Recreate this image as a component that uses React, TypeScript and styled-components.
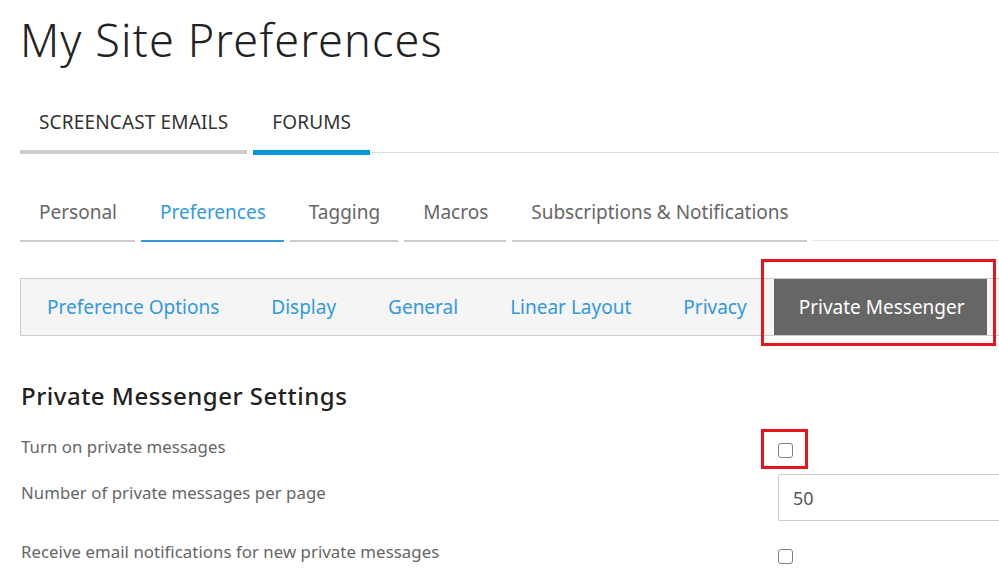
import React from 'react';
import styled, { createGlobalStyle } from 'styled-components';

const GlobalStyle = createGlobalStyle`
    html, body {
        margin: 0;
        padding: 0;
        background: #fff;
        overflow: hidden;
    }
    body {
        font-family: "Noto Sans", "Open Sans", Arial, sans-serif;
        color: #222;
    }
`;

const Page = styled.div`
    width: 1100px;
    padding: 17px 0 0 20px;
`;

const Title = styled.h1`
    margin: 0;
    font-size: 45px;
    line-height: 1;
    font-weight: 300;
    letter-spacing: 1.1px;
    color: #222;
`;

const MainTabs = styled.div`
    display: flex;
    align-items: flex-start;
    gap: 6px;
    margin-top: 48px;
`;

const MainTab = styled.div<{ $active?: boolean }>`
    padding: 0 19px 16px;
    font-size: 19px;
    line-height: 24px;
    letter-spacing: 0.15px;
    color: #333;
    text-transform: uppercase;
    border-bottom: ${p => (p.$active ? '5px solid #0696d7' : '4px solid #ccc')};
`;

const MainFiller = styled.div`
    flex: 1;
    align-self: stretch;
    border-bottom: 1px solid #ddd;
    margin-bottom: 2px;
    margin-left: -6px;
`;

const SubTabs = styled.div`
    display: flex;
    align-items: flex-end;
    gap: 6px;
    margin-top: 45px;
`;

const SubTab = styled.div<{ $active?: boolean }>`
    padding: 0 18px 16px 19px;
    font-size: 19px;
    line-height: 24px;
    color: ${p => (p.$active ? '#3399dd' : '#666')};
    border-bottom: 2px solid ${p => (p.$active ? '#3399dd' : '#ccc')};
`;

const SubFiller = styled.div`
    flex: 1;
    align-self: stretch;
    border-bottom: 1px solid #e3e3e3;
    margin-bottom: 1px;
`;

const OptionBar = styled.div`
    display: flex;
    margin-top: 36px;
    height: 56px;
    background: #f5f5f5;
    border: 1px solid #ccc;
`;

const Option = styled.div<{ $active?: boolean }>`
    position: relative;
    padding: 0 ${p => (p.$active ? '22px 0 25px' : '26px')};
    margin-left: ${p => (p.$active ? '1px' : '0')};
    font-size: 19px;
    line-height: 56px;
    white-space: nowrap;
    color: ${p => (p.$active ? '#fff' : '#3399dd')};
    background: ${p => (p.$active ? '#666' : 'transparent')};
    &:first-child {
        padding-left: 26px;
    }
`;

const Highlight = styled.span<{ $t: number; $r: number; $b: number; $l: number }>`
    position: absolute;
    top: ${p => p.$t}px;
    right: ${p => p.$r}px;
    bottom: ${p => p.$b}px;
    left: ${p => p.$l}px;
    border: 3px solid #e8141c;
    pointer-events: none;
`;

const Heading = styled.h2`
    margin: 44px 0 0 1px;
    font-size: 24px;
    line-height: 32px;
    font-weight: 500;
    letter-spacing: 0.5px;
    color: #222;
`;

const Settings = styled.div`
    display: flex;
    flex-direction: column;
    margin-top: 25px;
`;

const Row = styled.div<{ $height: number }>`
    display: grid;
    grid-template-columns: 758px 1fr;
    height: ${p => p.$height}px;
`;

const Label = styled.div<{ $top: number }>`
    padding: ${p => p.$top}px 0 0 1px;
    font-size: 16.8px;
    line-height: 20px;
    letter-spacing: 0.05px;
    color: #666;
`;

const Control = styled.div<{ $top: number }>`
    position: relative;
    padding-top: ${p => p.$top}px;
`;

const BoxWrap = styled.span`
    position: relative;
    display: inline-block;
    width: 15px;
    height: 15px;
`;

const Check = styled.input.attrs({ type: 'checkbox' })`
    appearance: none;
    display: block;
    margin: 0;
    width: 15px;
    height: 15px;
    box-sizing: border-box;
    border: 1.5px solid #808080;
    border-radius: 3px;
    background: #fff;
`;

const TextField = styled.input`
    display: block;
    box-sizing: border-box;
    width: 320px;
    height: 47px;
    padding: 0 14px;
    border: 1px solid #ccc;
    border-radius: 2px;
    font-family: inherit;
    font-size: 18px;
    color: #555;
    background: #fff;
`;

const App: React.FC = () => {
    return (
        <Page>
            <GlobalStyle />
            <Title>My Site Preferences</Title>

            <MainTabs>
                <MainTab>Screencast Emails</MainTab>
                <MainTab $active>Forums</MainTab>
                <MainFiller />
            </MainTabs>

            <SubTabs>
                <SubTab>Personal</SubTab>
                <SubTab $active>Preferences</SubTab>
                <SubTab>Tagging</SubTab>
                <SubTab>Macros</SubTab>
                <SubTab>Subscriptions &amp; Notifications</SubTab>
                <SubFiller />
            </SubTabs>

            <OptionBar>
                <Option>Preference Options</Option>
                <Option>Display</Option>
                <Option>General</Option>
                <Option>Linear Layout</Option>
                <Option>Privacy</Option>
                <Option $active>
                    Private Messenger
                    <Highlight $t={-20} $r={-9} $b={-11} $l={-13} />
                </Option>
            </OptionBar>

            <Heading>Private Messenger Settings</Heading>

            <Settings>
                <Row $height={37}>
                    <Label $top={0}>Turn on private messages</Label>
                    <Control $top={4}>
                        <BoxWrap>
                            <Check readOnly />
                            <Highlight $t={-14} $r={-15} $b={-11} $l={-17} />
                        </BoxWrap>
                    </Control>
                </Row>
                <Row $height={68}>
                    <Label $top={9}>Number of private messages per page</Label>
                    <Control $top={0}>
                        <TextField defaultValue="50" />
                    </Control>
                </Row>
                <Row $height={40}>
                    <Label $top={0}>Receive email notifications for new private messages</Label>
                    <Control $top={5}>
                        <BoxWrap>
                            <Check readOnly />
                        </BoxWrap>
                    </Control>
                </Row>
            </Settings>
        </Page>
    );
};

export default App;
